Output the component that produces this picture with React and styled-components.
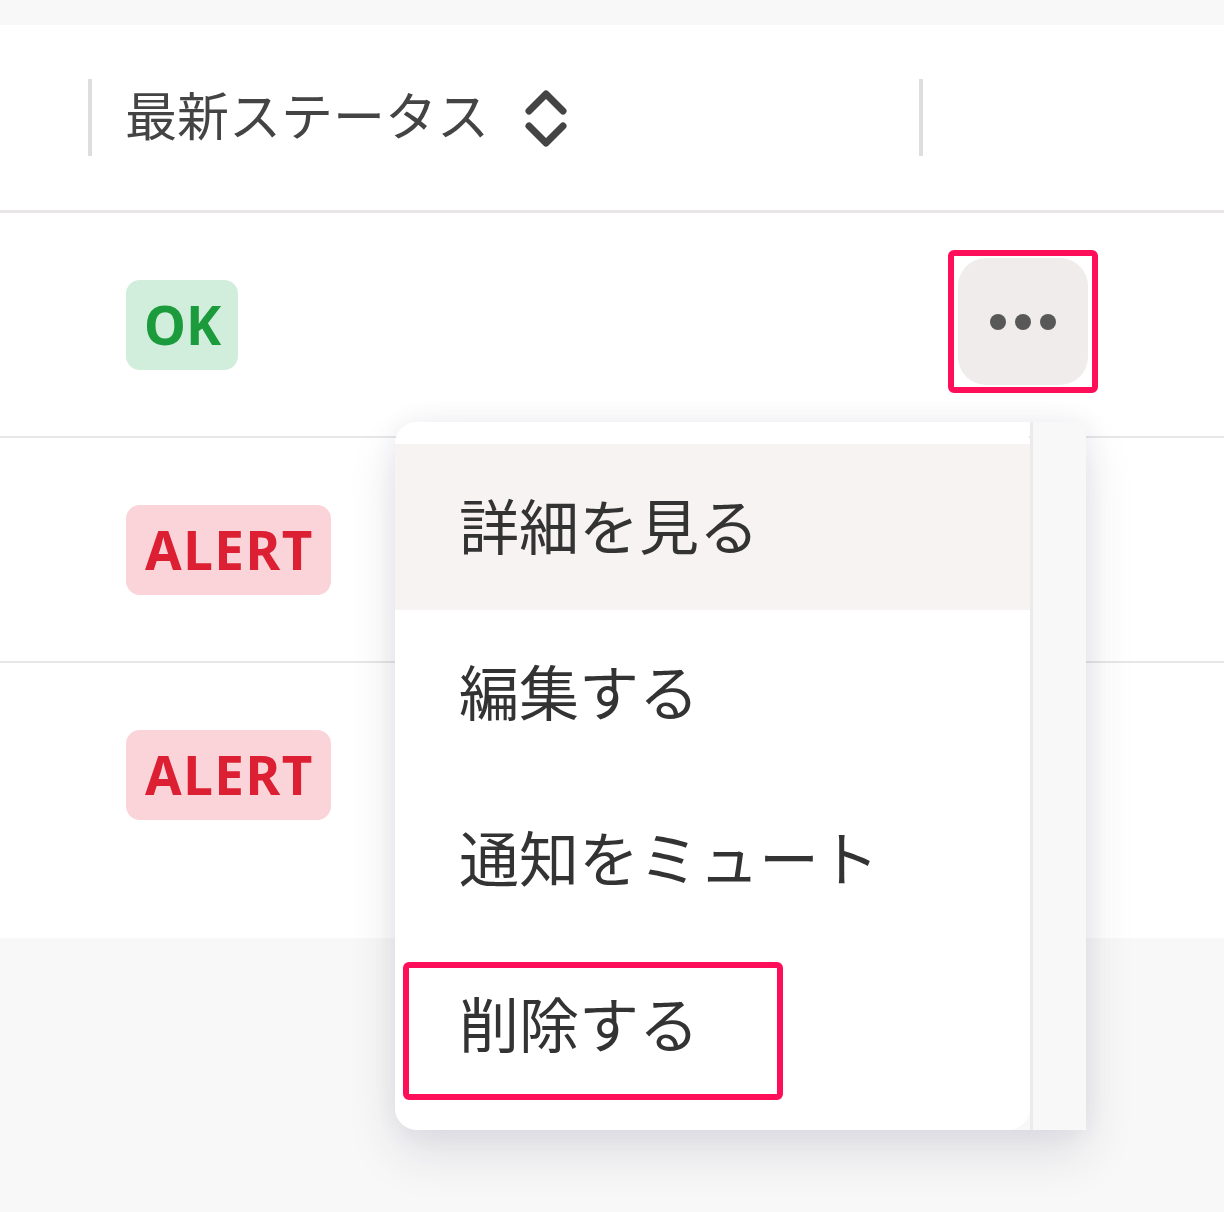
import React from 'react';
import styled, { createGlobalStyle } from 'styled-components';

const Global = createGlobalStyle`
  body {
    margin: 0;
    background: #f8f8f8;
    font-family: "Noto Sans", "Noto Sans CJK JP", sans-serif;
  }
`;

const Page = styled.div`
  min-height: 1212px;
  padding-top: 25px;
  box-sizing: border-box;
  background: #f8f8f8;
`;

const Panel = styled.div`
  background: #fff;
  padding-bottom: 52px;
`;

const Row = styled.div`
  display: grid;
  grid-template-columns: 88px 831px 1fr;
  height: ${p => (p.head ? '185px' : '223px')};
  border-bottom: ${p => (p.last ? 'none' : p.head ? '3px solid #e8e6e6' : '2px solid #e8e6e6')};
`;

const Cell = styled.div`
  position: relative;
  display: flex;
  align-items: center;
  padding-left: ${p => (p.pad ? '38px' : '0')};

  ${p =>
    p.divider &&
    `
    &::before {
      content: '';
      position: absolute;
      left: 0;
      top: 54px;
      width: 4px;
      height: 77px;
      background: #dedede;
    }
  `}
`;

const HeadLabel = styled.span`
  font-family: "Noto Sans CJK JP", sans-serif;
  font-size: 52px;
  color: #444;
  margin-top: -8px;
  margin-left: -1px;
`;

const SortIcon = styled.svg`
  margin-left: 35px;
  width: 44px;
  height: 64px;
`;

const Badge = styled.span`
  display: inline-block;
  height: 90px;
  line-height: 90px;
  padding: 0 17px 0 ${p => (p.alert ? '19px' : '18px')};
  border-radius: 14px;
  font-family: "Noto Sans", sans-serif;
  font-weight: 700;
  font-size: 53px;
  letter-spacing: ${p => (p.alert ? '1.5px' : '0')};
  background: ${p => (p.alert ? '#fad4d8' : '#d0eedb')};
  color: ${p => (p.alert ? '#dc1f32' : '#1c9b3c')};
`;

const ActionWrap = styled.div`
  position: relative;
  margin-bottom: 6px;
  margin-left: 1px;
`;

const MoreButton = styled.button`
  width: 130px;
  height: 127px;
  border: none;
  border-radius: 28px;
  background: #f0ecec;
  display: flex;
  align-items: center;
  justify-content: center;
  gap: 9px;
  padding: 0;
`;

const Dot = styled.span`
  width: 16px;
  height: 16px;
  border-radius: 50%;
  background: #585858;
`;

const Mark = styled.div`
  position: absolute;
  border: 6px solid #ff0f5a;
  border-radius: 6px;
  pointer-events: none;
`;

const ButtonMark = styled(Mark)`
  left: -10px;
  right: -10px;
  top: -8px;
  bottom: -8px;
`;

const Menu = styled.div`
  position: absolute;
  top: calc(100% + 37px);
  right: 2px;
  display: flex;
  z-index: 10;
  border-radius: 22px 0 0 22px;
  box-shadow: 0 24px 50px rgba(40, 40, 80, 0.12), 0 0 28px rgba(40, 40, 80, 0.06);
`;

const MenuList = styled.ul`
  list-style: none;
  margin: 0;
  width: 635px;
  padding: 22px 0;
  background: #fff;
  border-radius: 22px;
`;

const MenuItem = styled.li`
  position: relative;
  height: 166px;
  display: flex;
  align-items: center;
  padding-left: 64px;
  font-family: "Noto Sans CJK JP", sans-serif;
  font-size: 60px;
  color: #333;
  background: ${p => (p.active ? '#f7f3f2' : 'transparent')};

  & > span {
    margin-top: -8px;
  }
`;

const DeleteMark = styled(Mark)`
  left: 8px;
  top: 20px;
  width: 380px;
  height: 138px;
  box-sizing: border-box;
`;

const Track = styled.div`
  width: 53px;
  background: #f8f8f8;
  border-left: 3px solid #ebebeb;
`;

const rows = [
  { status: 'OK' },
  { status: 'ALERT' },
  { status: 'ALERT' },
];

const menuItems = ['詳細を見る', '編集する', '通知をミュート', '削除する'];

export default function App() {
  return (
    <>
      <Global />
      <Page>
        <Panel>
          <Row head>
            <Cell />
            <Cell pad divider>
              <HeadLabel>最新ステータス</HeadLabel>
              <SortIcon viewBox="0 0 44 64">
                <path d="M5 25 L22 8 L39 25" fill="none" stroke="#444" strokeWidth="7" strokeLinecap="round" strokeLinejoin="round" />
                <path d="M5 40 L22 57 L39 40" fill="none" stroke="#444" strokeWidth="7" strokeLinecap="round" strokeLinejoin="round" />
              </SortIcon>
            </Cell>
            <Cell divider />
          </Row>
          {rows.map((r, i) => (
            <Row key={i} last={i === rows.length - 1}>
              <Cell />
              <Cell pad>
                <Badge alert={r.status === 'ALERT'}>{r.status}</Badge>
              </Cell>
              <Cell pad>
                {i === 0 && (
                  <ActionWrap>
                    <MoreButton aria-label="more">
                      <Dot />
                      <Dot />
                      <Dot />
                    </MoreButton>
                    <ButtonMark />
                    <Menu>
                      <MenuList>
                        {menuItems.map((label, k) => (
                          <MenuItem key={label} active={k === 0}>
                            <span>{label}</span>
                            {k === menuItems.length - 1 && <DeleteMark />}
                          </MenuItem>
                        ))}
                      </MenuList>
                      <Track />
                    </Menu>
                  </ActionWrap>
                )}
              </Cell>
            </Row>
          ))}
        </Panel>
      </Page>
    </>
  );
}
